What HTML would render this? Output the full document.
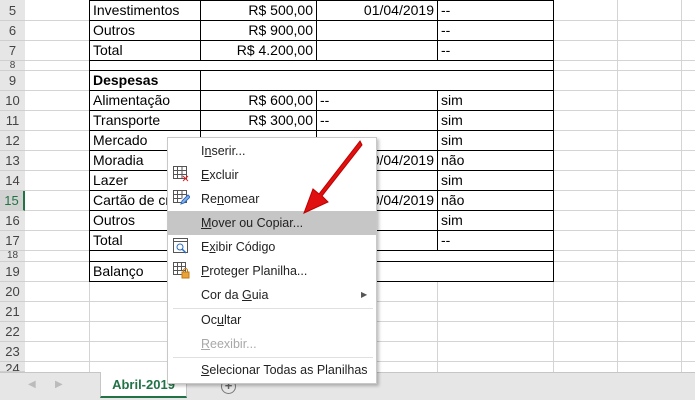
<!DOCTYPE html><html><head><meta charset="utf-8"><style>
*{margin:0;padding:0;box-sizing:border-box}
body{width:695px;height:400px;overflow:hidden;background:#fff;position:relative;font-family:"Liberation Sans",Arial,sans-serif;font-size:14px;color:#000}
.a{position:absolute}
.hl{position:absolute;left:0;width:695px;height:1px;background:#d4d4d4}
.vl{position:absolute;top:0;width:1px;height:372px;background:#d4d4d4}
.rh{position:absolute;left:0;width:25px;background:#e6e6e6;color:#444;text-align:center;font-size:13px;border-bottom:1px solid #cfcfcf}
.c{position:absolute;border:1px solid #000;padding:0 3px;line-height:19px;white-space:nowrap;overflow:hidden;background:#fff}
.r{text-align:right}
.mi{position:absolute;left:201px;font-size:12.5px;color:#222}
.mi u{text-decoration:underline}
</style></head><body>
<div class="vl" style="left:89px"></div><div class="vl" style="left:200px"></div><div class="vl" style="left:316px"></div><div class="vl" style="left:437px"></div><div class="vl" style="left:553px"></div><div class="vl" style="left:617px"></div><div class="vl" style="left:681px"></div>
<div class="hl" style="top:20px"></div><div class="hl" style="top:40px"></div><div class="hl" style="top:60px"></div><div class="hl" style="top:70px"></div><div class="hl" style="top:90px"></div><div class="hl" style="top:110px"></div><div class="hl" style="top:130px"></div><div class="hl" style="top:150px"></div><div class="hl" style="top:170px"></div><div class="hl" style="top:190px"></div><div class="hl" style="top:210px"></div><div class="hl" style="top:230px"></div><div class="hl" style="top:250px"></div><div class="hl" style="top:261px"></div><div class="hl" style="top:281px"></div><div class="hl" style="top:301px"></div><div class="hl" style="top:321px"></div><div class="hl" style="top:341px"></div><div class="hl" style="top:361px"></div>
<div class="a" style="left:0;top:0;width:25px;height:372px;background:#e6e6e6;border-right:1px solid #cfcfcf"></div>
<div class="rh" style="top:0;height:21px;line-height:21px">5</div>
<div class="rh" style="top:21px;height:20px;line-height:20px">6</div>
<div class="rh" style="top:41px;height:20px;line-height:20px">7</div>
<div class="rh" style="top:61px;height:10px;line-height:10px;overflow:hidden;font-size:10px">8</div>
<div class="rh" style="top:71px;height:20px;line-height:20px">9</div>
<div class="rh" style="top:91px;height:20px;line-height:20px">10</div>
<div class="rh" style="top:111px;height:20px;line-height:20px">11</div>
<div class="rh" style="top:131px;height:20px;line-height:20px">12</div>
<div class="rh" style="top:151px;height:20px;line-height:20px">13</div>
<div class="rh" style="top:171px;height:20px;line-height:20px">14</div>
<div class="rh" style="top:191px;height:20px;line-height:20px;background:#d2d2d2;color:#217346;border-right:2px solid #217346">15</div>
<div class="rh" style="top:211px;height:20px;line-height:20px">16</div>
<div class="rh" style="top:231px;height:20px;line-height:20px">17</div>
<div class="rh" style="top:251px;height:11px;line-height:10px;overflow:hidden;font-size:10px">18</div>
<div class="rh" style="top:262px;height:20px;line-height:20px">19</div>
<div class="rh" style="top:282px;height:20px;line-height:20px">20</div>
<div class="rh" style="top:302px;height:20px;line-height:20px">21</div>
<div class="rh" style="top:322px;height:20px;line-height:20px">22</div>
<div class="rh" style="top:342px;height:20px;line-height:20px">23</div>
<div class="rh" style="top:362px;height:10px;line-height:14px;overflow:hidden">24</div>
<div class="c" style="left:89px;top:0;width:112px;height:21px">Investimentos</div><div class="c r" style="left:200px;top:0;width:117px;height:21px">R$ 500,00</div><div class="c r" style="left:316px;top:0;width:122px;height:21px">01/04/2019</div><div class="c" style="left:437px;top:0;width:117px;height:21px">--</div>
<div class="c" style="left:89px;top:20px;width:112px;height:21px">Outros</div><div class="c r" style="left:200px;top:20px;width:117px;height:21px">R$ 900,00</div><div class="c" style="left:316px;top:20px;width:122px;height:21px"></div><div class="c" style="left:437px;top:20px;width:117px;height:21px">--</div>
<div class="c" style="left:89px;top:40px;width:112px;height:21px">Total</div><div class="c r" style="left:200px;top:40px;width:117px;height:21px">R$ 4.200,00</div><div class="c" style="left:316px;top:40px;width:122px;height:21px"></div><div class="c" style="left:437px;top:40px;width:117px;height:21px">--</div>
<div class="c" style="left:89px;top:60px;width:465px;height:11px"></div>
<div class="c" style="left:89px;top:70px;width:112px;height:21px;font-weight:bold">Despesas</div><div class="c" style="left:200px;top:70px;width:354px;height:21px"></div>
<div class="c" style="left:89px;top:90px;width:112px;height:21px">Alimentação</div><div class="c r" style="left:200px;top:90px;width:117px;height:21px">R$ 600,00</div><div class="c" style="left:316px;top:90px;width:122px;height:21px">--</div><div class="c" style="left:437px;top:90px;width:117px;height:21px">sim</div>
<div class="c" style="left:89px;top:110px;width:112px;height:21px">Transporte</div><div class="c r" style="left:200px;top:110px;width:117px;height:21px">R$ 300,00</div><div class="c" style="left:316px;top:110px;width:122px;height:21px">--</div><div class="c" style="left:437px;top:110px;width:117px;height:21px">sim</div>
<div class="c" style="left:89px;top:130px;width:112px;height:21px">Mercado</div><div class="c r" style="left:200px;top:130px;width:117px;height:21px"></div><div class="c" style="left:316px;top:130px;width:122px;height:21px"></div><div class="c" style="left:437px;top:130px;width:117px;height:21px">sim</div>
<div class="c" style="left:89px;top:150px;width:112px;height:21px">Moradia</div><div class="c r" style="left:200px;top:150px;width:117px;height:21px"></div><div class="c r" style="left:316px;top:150px;width:122px;height:21px">10/04/2019</div><div class="c" style="left:437px;top:150px;width:117px;height:21px">não</div>
<div class="c" style="left:89px;top:170px;width:112px;height:21px">Lazer</div><div class="c r" style="left:200px;top:170px;width:117px;height:21px"></div><div class="c" style="left:316px;top:170px;width:122px;height:21px"></div><div class="c" style="left:437px;top:170px;width:117px;height:21px">sim</div>
<div class="c" style="left:89px;top:190px;width:112px;height:21px">Cartão de crédito</div><div class="c r" style="left:200px;top:190px;width:117px;height:21px"></div><div class="c r" style="left:316px;top:190px;width:122px;height:21px">10/04/2019</div><div class="c" style="left:437px;top:190px;width:117px;height:21px">não</div>
<div class="c" style="left:89px;top:210px;width:112px;height:21px">Outros</div><div class="c r" style="left:200px;top:210px;width:117px;height:21px"></div><div class="c" style="left:316px;top:210px;width:122px;height:21px"></div><div class="c" style="left:437px;top:210px;width:117px;height:21px">sim</div>
<div class="c" style="left:89px;top:230px;width:112px;height:21px">Total</div><div class="c r" style="left:200px;top:230px;width:117px;height:21px"></div><div class="c" style="left:316px;top:230px;width:122px;height:21px"></div><div class="c" style="left:437px;top:230px;width:117px;height:21px">--</div>
<div class="c" style="left:89px;top:250px;width:465px;height:12px"></div>
<div class="c" style="left:89px;top:261px;width:112px;height:21px">Balanço</div><div class="c" style="left:200px;top:261px;width:354px;height:21px"></div>
<div class="a" style="left:0;top:372px;width:695px;height:28px;background:#e6e6e6;border-top:1px solid #c6c6c6"></div>
<div class="a" style="left:28px;top:379px;color:#bbb;font-size:10px">◀</div>
<div class="a" style="left:55px;top:379px;color:#bbb;font-size:10px">▶</div>
<div class="a" style="left:100px;top:372px;width:87px;height:26px;background:#fff;border:1px solid #c6c6c6;border-top:none;border-bottom:2px solid #217346;color:#217346;font-weight:bold;text-align:center;line-height:25px;font-size:13px">Abril-2019</div>
<div class="a" style="left:221px;top:379px;width:15px;height:15px;border:1.5px solid #777;border-radius:50%;color:#666;font-size:13px;line-height:12px;text-align:center;font-weight:bold">+</div>
<div class="a" style="left:167px;top:137px;width:210px;height:247px;background:#fff;border:1px solid #c8c8c8;box-shadow:2px 2px 3px rgba(0,0,0,.25)"></div>
<div class="a" style="left:168px;top:211px;width:208px;height:24px;background:#c6c6c6"></div>
<div class="a" style="left:173px;top:308px;width:200px;height:1px;background:#e0e0e0"></div>
<div class="a" style="left:173px;top:357px;width:200px;height:1px;background:#e0e0e0"></div>
<div class="mi" style="top:144px">I<u>n</u>serir...</div>
<div class="mi" style="top:168px"><u>E</u>xcluir</div>
<div class="mi" style="top:192px">Re<u>n</u>omear</div>
<div class="mi" style="top:216px"><u>M</u>over ou Copiar...</div>
<div class="mi" style="top:240px">E<u>x</u>ibir Código</div>
<div class="mi" style="top:264px"><u>P</u>roteger Planilha...</div>
<div class="mi" style="top:288px">Cor da <u>G</u>uia</div>
<div class="a" style="left:361px;top:290px;font-size:8px;color:#555">▶</div>
<div class="mi" style="top:313px">Oc<u>u</u>ltar</div>
<div class="mi" style="top:337px;color:#a8a8a8"><u>R</u>eexibir...</div>
<div class="mi" style="top:363px"><u>S</u>elecionar Todas as Planilhas</div>
<svg class="a" style="left:172px;top:165px" width="18" height="18" viewBox="0 0 18 18" fill="none" stroke="#555" stroke-width="1"><rect x="1.5" y="1.5" width="13" height="12"/><path d="M1.5 5.5h13M1.5 9.5h13M5.5 1.5v12M10 1.5v12"/><path d="M11 11l5 5M16 11l-5 5" stroke="#d22"/></svg>
<svg class="a" style="left:172px;top:189px" width="18" height="18" viewBox="0 0 18 18" fill="none" stroke="#555"><rect x="1.5" y="1.5" width="13" height="12"/><path d="M1.5 5.5h13M1.5 9.5h8M5.5 1.5v12M10 1.5v8"/><path d="M9 15l1-3 6-6 2 2-6 6z" stroke="#2b6cc4" fill="#8ab4e8"/></svg>
<svg class="a" style="left:172px;top:237px" width="18" height="18" viewBox="0 0 18 18" fill="none" stroke="#555"><rect x="1.5" y="1.5" width="14" height="14"/><path d="M1.5 4.5h14"/><circle cx="8" cy="10" r="3" stroke="#2b6cc4"/><path d="M10 12l4 4" stroke="#2b6cc4" stroke-width="1.5"/></svg>
<svg class="a" style="left:172px;top:261px" width="18" height="18" viewBox="0 0 18 18" fill="none" stroke="#555"><rect x="1.5" y="1.5" width="12" height="12"/><path d="M1.5 5.5h12M1.5 9.5h12M5.5 1.5v12M9.5 1.5v8"/><rect x="10" y="11" width="7" height="6" fill="#e8a33a" stroke="#c07a10"/><path d="M11.5 11V9.5a2 2 0 014 0V11" stroke="#c07a10"/></svg>
<svg class="a" style="left:290px;top:138px" width="80" height="80" viewBox="0 0 80 80"><path d="M70 3 L72 7 L32 58 L38 64 L14 75 L23 51 L29 56 Z" fill="#e01010" stroke="#b00" stroke-width="1"/></svg>
</body></html>
